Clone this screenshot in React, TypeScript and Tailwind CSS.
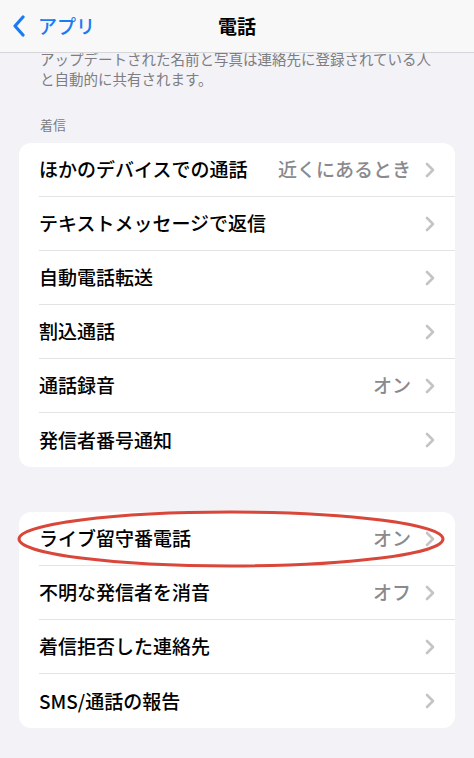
import { ReactNode } from 'react';

const font = { fontFamily: '"Noto Sans CJK JP", "Noto Sans", sans-serif' };

type Row = { label: string; value?: string; marked?: boolean };

const incoming: Row[] = [
  { label: 'ほかのデバイスでの通話', value: '近くにあるとき' },
  { label: 'テキストメッセージで返信' },
  { label: '自動電話転送' },
  { label: '割込通話' },
  { label: '通話録音', value: 'オン' },
  { label: '発信者番号通知' },
];

const more: Row[] = [
  { label: 'ライブ留守番電話', value: 'オン', marked: true },
  { label: '不明な発信者を消音', value: 'オフ' },
  { label: '着信拒否した連絡先' },
  { label: 'SMS/通話の報告' },
];

function Chevron() {
  return (
    <svg width="10" height="16" viewBox="0 0 10 16" fill="none" className="shrink-0">
      <path d="M2 2l6 6-6 6" stroke="#c4c4c7" strokeWidth="2.6" strokeLinecap="round" strokeLinejoin="round" />
    </svg>
  );
}

function SettingsRow({ row, last }: { row: Row; last: boolean }) {
  return (
    <div className="relative flex h-[54px] items-center pl-5">
      <div className={`flex h-full flex-1 items-center pr-[20px] ${last ? '' : 'border-b border-[#e3e3e6]'}`}>
        <span className="flex-1 text-[19px] font-medium text-black">{row.label}</span>
        {row.value && <span className="mr-[14px] text-[19px] font-medium text-[#8a8a8e]">{row.value}</span>}
        <Chevron />
      </div>
      {row.marked && (
        <svg
          className="pointer-events-none absolute left-[-3px] top-[-3px]"
          width="434"
          height="60"
          viewBox="0 0 434 60"
          fill="none"
        >
          <ellipse cx="215" cy="30" rx="212" ry="27" stroke="#d9473b" strokeWidth="3" />
        </svg>
      )}
    </div>
  );
}

function Group({ rows }: { rows: Row[] }): ReactNode {
  return (
    <div className="mx-[19px] rounded-[12px] bg-white">
      {rows.map((r, i) => (
        <SettingsRow key={r.label} row={r} last={i === rows.length - 1} />
      ))}
    </div>
  );
}

export default function App() {
  return (
    <div className="flex h-[758px] w-[474px] flex-col overflow-hidden bg-[#f2f2f7]" style={font}>
      <header className="relative z-10 flex h-[53px] shrink-0 items-center border-b border-[#d6d6d9] bg-[#f8f8f9]">
        <div className="flex items-center pl-[12px] text-[#1a7cf3]">
          <svg width="14" height="22" viewBox="0 0 14 22" fill="none">
            <path d="M11 2L3 11l8 9" stroke="#1a7cf3" strokeWidth="3.2" strokeLinecap="round" strokeLinejoin="round" />
          </svg>
          <span className="ml-[12px] text-[19px] font-medium">アプリ</span>
        </div>
        <h1 className="absolute left-0 right-0 text-center text-[19px] font-bold text-black">電話</h1>
      </header>
      <main className="flex-1 overflow-hidden">
        <p className="mt-[-4px] px-[40px] text-[14.5px] leading-[20px] text-[#7d7d82]">
          アップデートされた名前と写真は連絡先に登録されている人
          <br />
          と自動的に共有されます。
        </p>
        <div className="mt-[27px] px-[40px] text-[13px] leading-[18px] text-[#7d7d82]">着信</div>
        <div className="mt-[9px]">
          <Group rows={incoming} />
        </div>
        <div className="mt-[45px]">
          <Group rows={more} />
        </div>
      </main>
    </div>
  );
}
